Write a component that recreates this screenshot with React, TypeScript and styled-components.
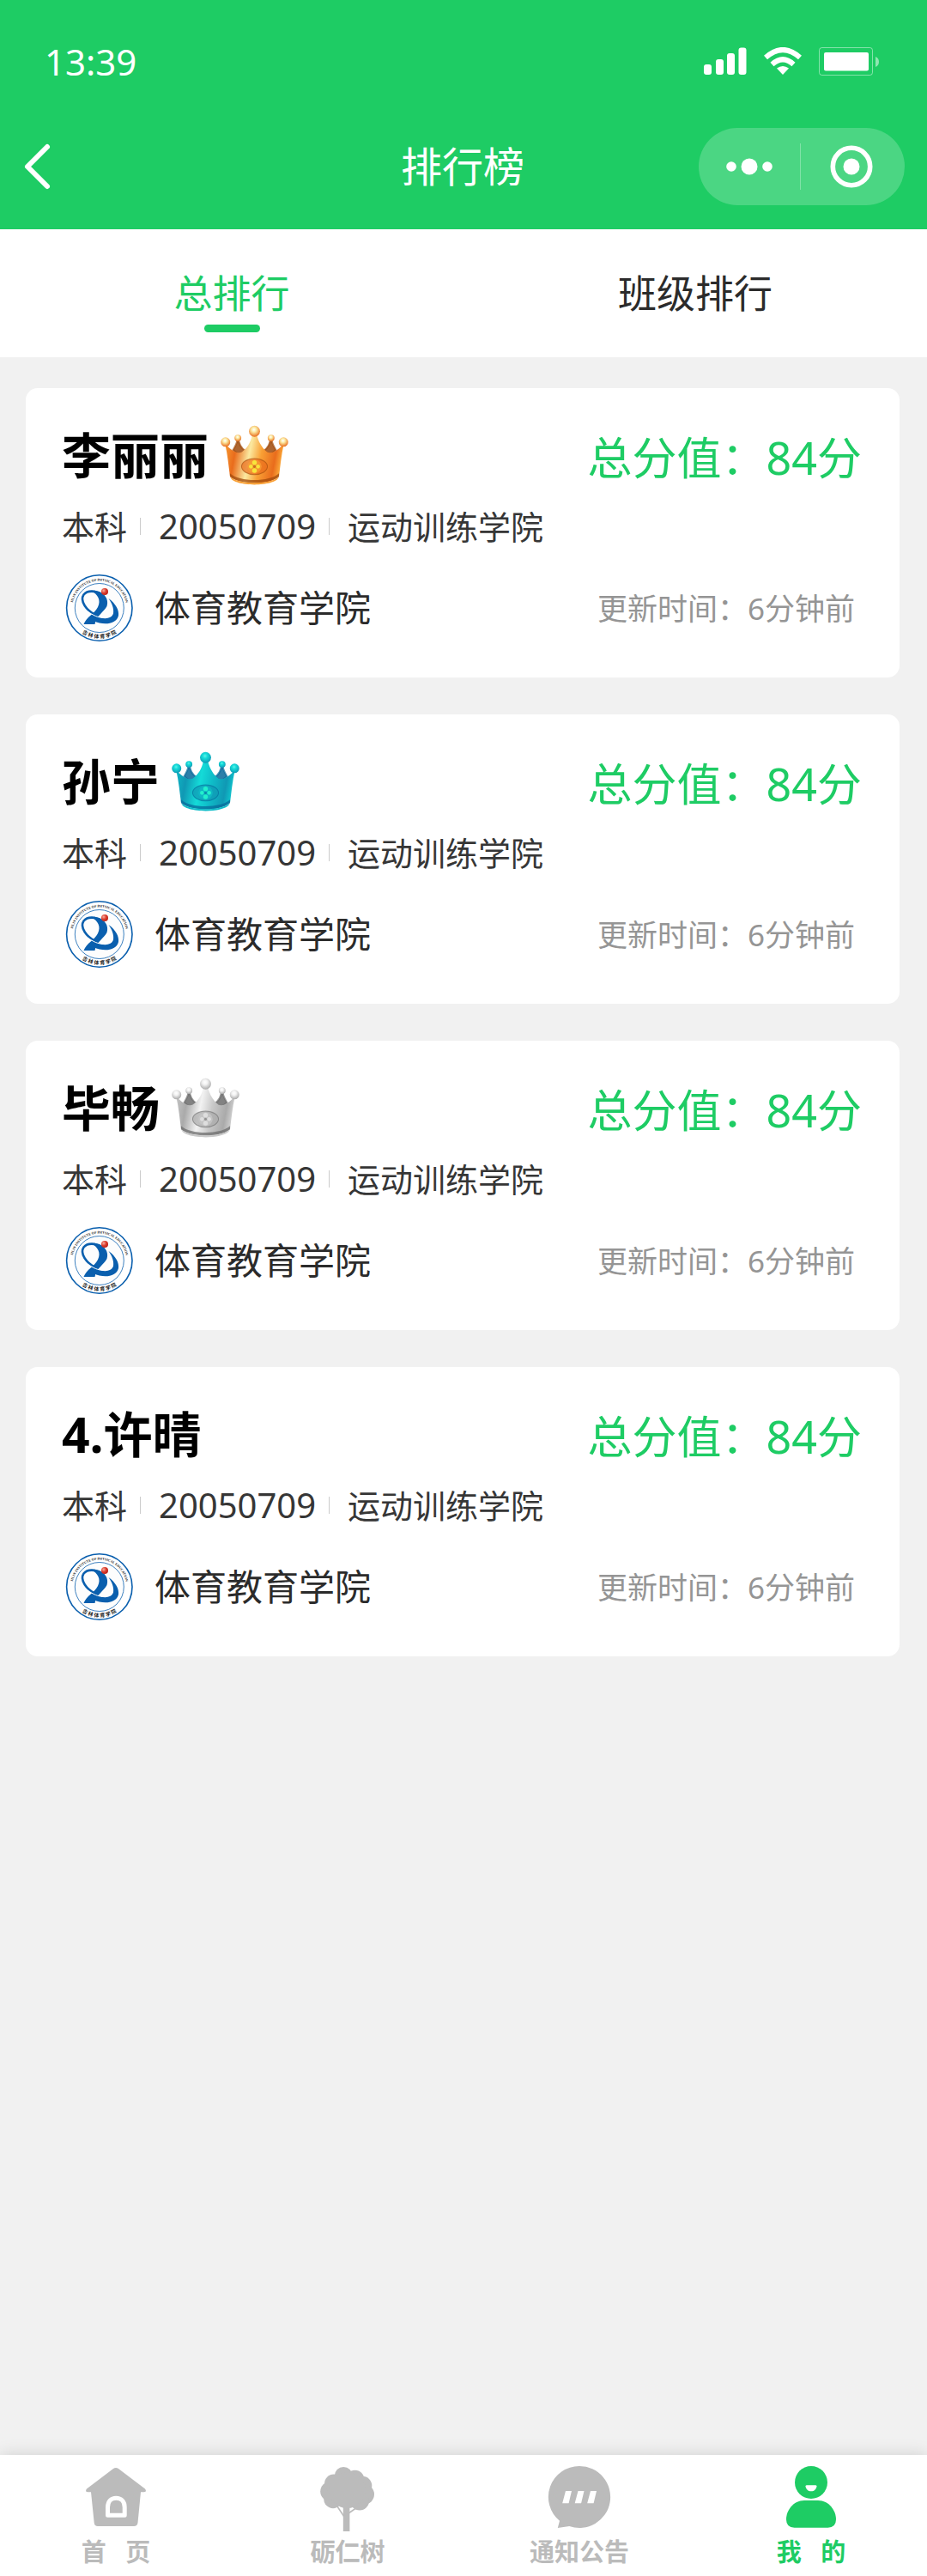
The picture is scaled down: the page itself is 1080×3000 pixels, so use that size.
import React, { useState } from "react";
import styled, { createGlobalStyle } from "styled-components";

const green = "#1ecc64";
const grey = "#bbbbbb";

const GlobalStyle = createGlobalStyle`
  *, *::before, *::after { box-sizing: border-box; }
  body {
    margin: 0;
    background: #f1f1f1;
    color: #2b2b2b;
    font-family: "Noto Sans", "Noto Sans CJK SC", sans-serif;
  }
  button { font: inherit; border: 0; padding: 0; background: none; color: inherit; cursor: pointer; }
  a { color: inherit; text-decoration: none; }
  ul { list-style: none; margin: 0; padding: 0; }
  h1, h2, p { margin: 0; font-weight: inherit; }
  svg { display: block; flex: none; }
`;

const Page = styled.div`
  min-height: 100vh;
  display: flex;
  flex-direction: column;
`;

const Header = styled.header`
  background: ${green};
  color: #fff;
  padding-bottom: 28px;
`;

const StatusBar = styled.div`
  height: 149px;
  padding: 40px 54px 45px 52px;
  display: flex;
  align-items: center;
  justify-content: space-between;
`;

const Clock = styled.time`
  font-size: 42px;
  line-height: 64px;
`;

const StatusIcons = styled.div`
  display: flex;
  align-items: center;
  gap: 20px;
`;

const TitleBar = styled.div`
  display: grid;
  grid-template-columns: 1fr auto 1fr;
  align-items: center;
  height: 90px;
  padding: 0 26px 0 24px;
`;

const BackButton = styled.button`
  width: 40px;
  height: 60px;
`;

const Title = styled.h1`
  font-size: 48px;
  line-height: 64px;
`;

const Capsule = styled.div`
  justify-self: end;
  display: flex;
  align-items: center;
  width: 240px;
  height: 90px;
  padding-right: 3px;
  border-radius: 45px;
  background: rgba(255, 255, 255, 0.2);
`;

const CapsuleButton = styled.button`
  flex: 1;
  height: 54px;
  display: grid;
  place-items: center;

  & + & { border-left: 1px solid rgba(255, 255, 255, 0.3); }
`;

const Tabs = styled.div`
  display: flex;
  height: 149px;
  background: #fff;
`;

const Tab = styled.button<{ $active: boolean }>`
  flex: 1;
  display: flex;
  flex-direction: column;
  align-items: center;
  justify-content: flex-start;
  gap: 4px;
  padding-top: 43px;
  font-size: 45px;
  line-height: 64px;
  color: ${(p) => (p.$active ? green : "#2b2b2b")};

  &::after {
    content: "";
    width: 65px;
    height: 9px;
    border-radius: 5px;
    background: ${(p) => (p.$active ? green : "transparent")};
  }
`;

const Ranking = styled.ul`
  flex: 1;
  display: flex;
  flex-direction: column;
  gap: 43px;
  padding: 36px 32px 43px 30px;
`;

const Card = styled.li`
  background: #fff;
  border-radius: 14px;
  padding: 40px 44px 42px 42px;
`;

const CardTop = styled.div`
  display: flex;
  align-items: center;
  height: 76px;
`;

const Name = styled.h2`
  margin-right: 14px;
  font-size: 57px;
  line-height: 76px;
  font-weight: 700;
  color: #000;
`;

const Score = styled.p`
  margin-left: auto;
  padding-top: 6px;
  font-size: 52px;
  line-height: 76px;
  color: ${green};
`;

const Meta = styled.div`
  display: flex;
  align-items: center;
  margin-top: 21px;
  font-size: 38px;
  line-height: 48px;
  color: #363636;
`;

const Divider = styled.span`
  width: 1px;
  height: 20px;
  margin: 0 21px 0 15px;
  background: #cccccc;
`;

const StudentNumber = styled.span`
  font-size: 40px;
`;

const CardBottom = styled.div`
  display: flex;
  align-items: center;
  gap: 24px;
  margin-top: 32px;
  padding: 0 8px 0 4px;
`;

const School = styled.span`
  font-size: 42px;
  line-height: 64px;
`;

const Updated = styled.span`
  margin-left: auto;
  padding-top: 2px;
  font-size: 35px;
  line-height: 48px;
  color: #959595;
`;

const BottomNav = styled.nav`
  display: flex;
  height: 141px;
  background: #fff;
  box-shadow: 0 0 18px rgba(0, 0, 0, 0.14);
`;

const NavItem = styled.a<{ $active: boolean }>`
  flex: 1;
  display: flex;
  flex-direction: column;
  align-items: center;
  gap: 2px;
  padding-top: 11px;
  font-size: 29px;
  line-height: 40px;
  font-weight: 700;
  white-space: pre;
  color: ${(p) => (p.$active ? green : grey)};
`;

const SignalIcon = () => (
  <svg width="50" height="34" viewBox="0 0 50 34" fill="#fff" aria-hidden="true">
    <rect x="0" y="20" width="9" height="12" rx="3" />
    <rect x="14" y="14" width="9" height="18" rx="3" />
    <rect x="27" y="7" width="9" height="25" rx="3" />
    <rect x="40.500" y="0.500" width="9" height="31.500" rx="3" />
  </svg>
);

const WifiIcon = () => (
  <svg width="44" height="34" viewBox="0 0 44 34" fill="none" stroke="#fff" aria-hidden="true">
    <path d="M2 12Q22 -6 42 12" strokeWidth="6" />
    <path d="M9.500 20Q22 8.500 34.500 20" strokeWidth="6" />
    <path d="M15 24.500Q22 19.500 29 24.500L22 32Z" fill="#fff" stroke="none" />
  </svg>
);

const BatteryIcon = () => (
  <svg width="72" height="34" viewBox="0 0 72 34" aria-hidden="true">
    <rect x="0.500" y="0.500" width="62" height="32" rx="3" fill="none" stroke="#fff" strokeOpacity="0.45" />
    <rect x="6" y="6" width="52" height="21.500" rx="2" fill="#fff" />
    <path d="M66 11Q70 12.500 70 17T66 23Z" fill="#fff" fillOpacity="0.5" />
  </svg>
);

const BackIcon = () => (
  <svg width="40" height="60" viewBox="0 0 40 60" fill="none" stroke="#fff" strokeWidth="6" strokeLinecap="round" strokeLinejoin="round" aria-hidden="true">
    <path d="M31 7L8 30L31 53" />
  </svg>
);

const MoreIcon = () => (
  <svg width="56" height="20" viewBox="0 0 56 20" fill="#fff" aria-hidden="true">
    <circle cx="7" cy="10" r="5.800" />
    <circle cx="28" cy="10" r="9.500" />
    <circle cx="49" cy="10" r="5.800" />
  </svg>
);

const CloseIcon = () => (
  <svg width="50" height="50" viewBox="0 0 50 50" aria-hidden="true">
    <circle cx="25" cy="25" r="21.700" fill="none" stroke="#fff" strokeWidth="5.600" />
    <circle cx="25" cy="25" r="9.500" fill="#fff" />
  </svg>
);

type Tone = { light: string; mid: string; deep: string; dark: string; gem: string; shine: string };

const tones: Record<string, Tone> = {
  gold: { light: "#fbe9a0", mid: "#f9a035", deep: "#e96c1c", dark: "#a04a0c", gem: "#f7e53c", shine: "#ffffff" },
  teal: { light: "#14dbd8", mid: "#0fbcc8", deep: "#1098b4", dark: "#07689a", gem: "#22f0cc", shine: "#5ff2ea" },
  silver: { light: "#f2f2f2", mid: "#c9c9c9", deep: "#aaaaaa", dark: "#6c6c6c", gem: "#dedede", shine: "#ffffff" },
};

const Crown = ({ tone }: { tone: string }) => {
  const c = tones[tone];
  const body = `crown-body-${tone}`;
  const ball = `crown-ball-${tone}`;
  return (
    <svg width="80" height="72" viewBox="0 -1 77 69.300" role="img" aria-label="皇冠">
      <defs>
        <linearGradient id={body} x1="0" x2="1" y1="0" y2="0.150">
          <stop offset="0" stopColor={c.mid} />
          <stop offset="0.220" stopColor={c.deep} />
          <stop offset="0.460" stopColor={c.light} />
          <stop offset="0.660" stopColor={c.mid} />
          <stop offset="0.900" stopColor={c.deep} />
          <stop offset="1" stopColor={c.mid} />
        </linearGradient>
        <radialGradient id={ball} cx="0.450" cy="0.350" r="0.650">
          <stop offset="0" stopColor={c.shine} />
          <stop offset="0.350" stopColor={c.light} />
          <stop offset="1" stopColor={c.deep} />
        </radialGradient>
      </defs>
      <path d="M19 15C19 20 17 23 14 28L20 33L28 29C23 26 20 20 20 15Z" fill={c.dark} fillOpacity="0.85" stroke={c.dark} strokeOpacity="0.7" strokeWidth="2" />
      <path d="M57 15C57 20 59 23 62 28L56 33L48 29C53 26 56 20 56 15Z" fill={c.dark} fillOpacity="0.85" stroke={c.dark} strokeOpacity="0.7" strokeWidth="2" />
      <path d="M5 21C12 29 19 33 24 30C30 26 34 19 35.500 11L40.500 11C43 20 47 26 52 30C57 33 64 29 71 21C68 34 67 46 65.500 57C56 68 20 68 10.500 57C9 46 8 34 5 21Z" fill={`url(#${body})`} />
      <path d="M10.500 54C21 64 55 64 65.500 54L65.500 58C55 67 21 67 10.500 58Z" fill={c.dark} fillOpacity="0.75" />
      <path d="M11 58.500C22 67 54 67 65 58.500C62 69.500 14 69.500 11 58.500Z" fill={c.mid} />
      <ellipse cx="38" cy="46.500" rx="14.500" ry="9" fill={c.deep} fillOpacity="0.7" stroke={c.dark} strokeOpacity="0.6" />
      <ellipse cx="38" cy="46.500" rx="8" ry="7.500" fill={c.mid} fillOpacity="0.7" />
      <g fill={c.gem}>
        <circle cx="38" cy="42" r="2.600" />
        <circle cx="38" cy="51" r="2.600" />
        <circle cx="34" cy="46.500" r="2.200" />
        <circle cx="42" cy="46.500" r="2.200" />
      </g>
      <circle cx="38" cy="46.500" r="1.500" fill={c.dark} fillOpacity="0.55" />
      <g fill={`url(#${ball})`}>
        <circle cx="38" cy="7" r="6.200" />
        <circle cx="5.500" cy="19" r="5.300" />
        <circle cx="70.500" cy="19" r="5.300" />
        <circle cx="19.400" cy="14.500" r="3.800" />
        <circle cx="56.600" cy="14.500" r="3.800" />
      </g>
    </svg>
  );
};

const SchoolLogo = ({ id }: { id: string }) => (
  <svg width="80" height="78" viewBox="0 0 80 78" role="img" aria-label="吉林体育学院">
    <defs>
      <path id={`${id}-top`} d="M8.300 39A31.500 31.500 0 0 1 71.300 39" />
      <path id={`${id}-bottom`} d="M4.300 39A35.500 35.500 0 0 0 75.300 39" />
      <radialGradient id={`${id}-ball`} cx="0.350" cy="0.350" r="0.700">
        <stop offset="0" stopColor="#f7b0a4" />
        <stop offset="0.500" stopColor="#dc4030" />
        <stop offset="1" stopColor="#b81f18" />
      </radialGradient>
    </defs>
    <circle cx="39.800" cy="39" r="38.200" fill="#fff" stroke="#0a5fae" strokeWidth="1.600" />
    <circle cx="39.800" cy="39" r="28.500" fill="#fdfdfd" stroke="#0a5fae" strokeWidth="0.800" />
    <text fontFamily="'Liberation Serif', serif" fontSize="4" fontWeight="700" fill="#222" textAnchor="middle">
      <textPath href={`#${id}-top`} startOffset="50%">JILIN INSTITUTE OF PHYSICAL EDUCATION</textPath>
    </text>
    <text fontFamily="'Noto Sans CJK SC', sans-serif" fontSize="6" fontWeight="700" fill="#222" textAnchor="middle">
      <textPath href={`#${id}-bottom`} startOffset="50%">吉 林 体 育 学 院</textPath>
    </text>
    <path d="M46 29C43 19 27 17 21.500 23.500C16.500 31 25 42 35 47" fill="none" stroke="#0a5fae" strokeWidth="2.600" />
    <path d="M30 19C42 17.500 52 27 48.500 37C45 44 36 48 34.500 58L21.500 58C25 49 34 46 38 38C42 30 38 23 30 19Z" fill="#0a5fae" />
    <path d="M50.500 28C59 34 63 42 62 48C59.500 58.500 44 59.500 33 54C33 51 34 49 36 48C44 53 54 52 56 45.500C57 39 54 33 50.500 28Z" fill="#0a5fae" />
    <path d="M26 43C33 48 38 50 44 50.500" fill="none" stroke="#fff" strokeWidth="1" />
    <circle cx="46" cy="20" r="4" fill={`url(#${id}-ball)`} />
  </svg>
);

const HomeIcon = () => (
  <svg width="80" height="80" viewBox="0 0 80 80" fill="currentColor" aria-hidden="true">
    <path d="M37 5Q40 3 43 5L74 28.500Q76.500 32 72.500 32.300H69L65.500 68Q65 72 61 72H19Q15 72 14.700 68L11 32.300H7.500Q3.500 32 6 28.500Z" />
    <path d="M30.500 59.200V50C30.500 43 34.500 39.200 40.300 39.200S50.200 43 50.200 50V59.200Z" fill="none" stroke="#fff" strokeWidth="5" strokeLinejoin="round" />
  </svg>
);

const TreeIcon = () => (
  <svg width="80" height="80" viewBox="0 0 80 80" fill="currentColor" aria-hidden="true">
    <circle cx="35.200" cy="13.500" r="10.500" />
    <circle cx="48.500" cy="17.500" r="10.800" />
    <circle cx="57" cy="25" r="11.300" />
    <circle cx="59.500" cy="35" r="11.500" />
    <circle cx="54" cy="42.500" r="11" />
    <circle cx="23" cy="40.500" r="10.700" />
    <circle cx="19.500" cy="31.500" r="11.300" />
    <circle cx="24" cy="22.500" r="11" />
    <circle cx="39.500" cy="30" r="21" />
    <path d="M34.800 46H42.400V78H34.800Z" />
    <path d="M28 49L36 61M49 51.500L41 57" fill="none" stroke="currentColor" strokeWidth="1.600" />
  </svg>
);

const NoticeIcon = () => (
  <svg width="80" height="80" viewBox="0 0 80 80" fill="currentColor" aria-hidden="true">
    <path d="M40 2A36 36 0 1 1 28.300 72L14.800 74L17 65.800A36 36 0 0 1 40 2Z" />
    <path d="M24 31H31L27.600 45.300H20.200ZM38.500 31H45.500L42.100 45.300H34.700ZM53 31H60L56.600 45.300H49.200Z" fill="#fff" />
  </svg>
);

const MeIcon = () => (
  <svg width="80" height="80" viewBox="0 0 80 80" fill="currentColor" aria-hidden="true">
    <circle cx="40" cy="21" r="19" />
    <path d="M33.500 25.500Q33.500 24.300 35 24.300H45Q46.500 24.300 46.500 25.500C46 29 43.500 31.300 40 31.300S34 29 33.500 25.500Z" fill="#fff" />
    <path d="M32 42H48C61 42 69 54 69 64Q69 73.700 59.500 73.700H20.500Q11 73.700 11 64C11 54 19 42 32 42Z" />
  </svg>
);

const students = [
  { name: "李丽丽", crown: "gold" },
  { name: "孙宁", crown: "teal" },
  { name: "毕畅", crown: "silver" },
  { name: "4.许晴", crown: null },
];

const navItems = [
  { label: "首   页", Icon: HomeIcon },
  { label: "砺仁树", Icon: TreeIcon },
  { label: "通知公告", Icon: NoticeIcon },
  { label: "我   的", Icon: MeIcon },
];

export default function App() {
  const [tab, setTab] = useState(0);
  return (
    <>
      <GlobalStyle />
      <Page>
        <Header>
          <StatusBar>
            <Clock>13:39</Clock>
            <StatusIcons>
              <SignalIcon />
              <WifiIcon />
              <BatteryIcon />
            </StatusIcons>
          </StatusBar>
          <TitleBar>
            <BackButton aria-label="返回"><BackIcon /></BackButton>
            <Title>排行榜</Title>
            <Capsule>
              <CapsuleButton aria-label="更多"><MoreIcon /></CapsuleButton>
              <CapsuleButton aria-label="关闭"><CloseIcon /></CapsuleButton>
            </Capsule>
          </TitleBar>
        </Header>
        <Tabs role="tablist">
          {["总排行", "班级排行"].map((label, i) => (
            <Tab key={label} role="tab" aria-selected={tab === i} $active={tab === i} onClick={() => setTab(i)}>
              {label}
            </Tab>
          ))}
        </Tabs>
        <Ranking>
          {students.map((s, i) => (
            <Card key={s.name}>
              <CardTop>
                <Name>{s.name}</Name>
                {s.crown && <Crown tone={s.crown} />}
                <Score>总分值：84分</Score>
              </CardTop>
              <Meta>
                <span>本科</span>
                <Divider />
                <StudentNumber>20050709</StudentNumber>
                <Divider />
                <span>运动训练学院</span>
              </Meta>
              <CardBottom>
                <SchoolLogo id={`logo-${i}`} />
                <School>体育教育学院</School>
                <Updated>更新时间：6分钟前</Updated>
              </CardBottom>
            </Card>
          ))}
        </Ranking>
        <BottomNav>
          {navItems.map(({ label, Icon }, i) => (
            <NavItem key={label} href="#" $active={i === 3}>
              <Icon />
              {label}
            </NavItem>
          ))}
        </BottomNav>
      </Page>
    </>
  );
}
